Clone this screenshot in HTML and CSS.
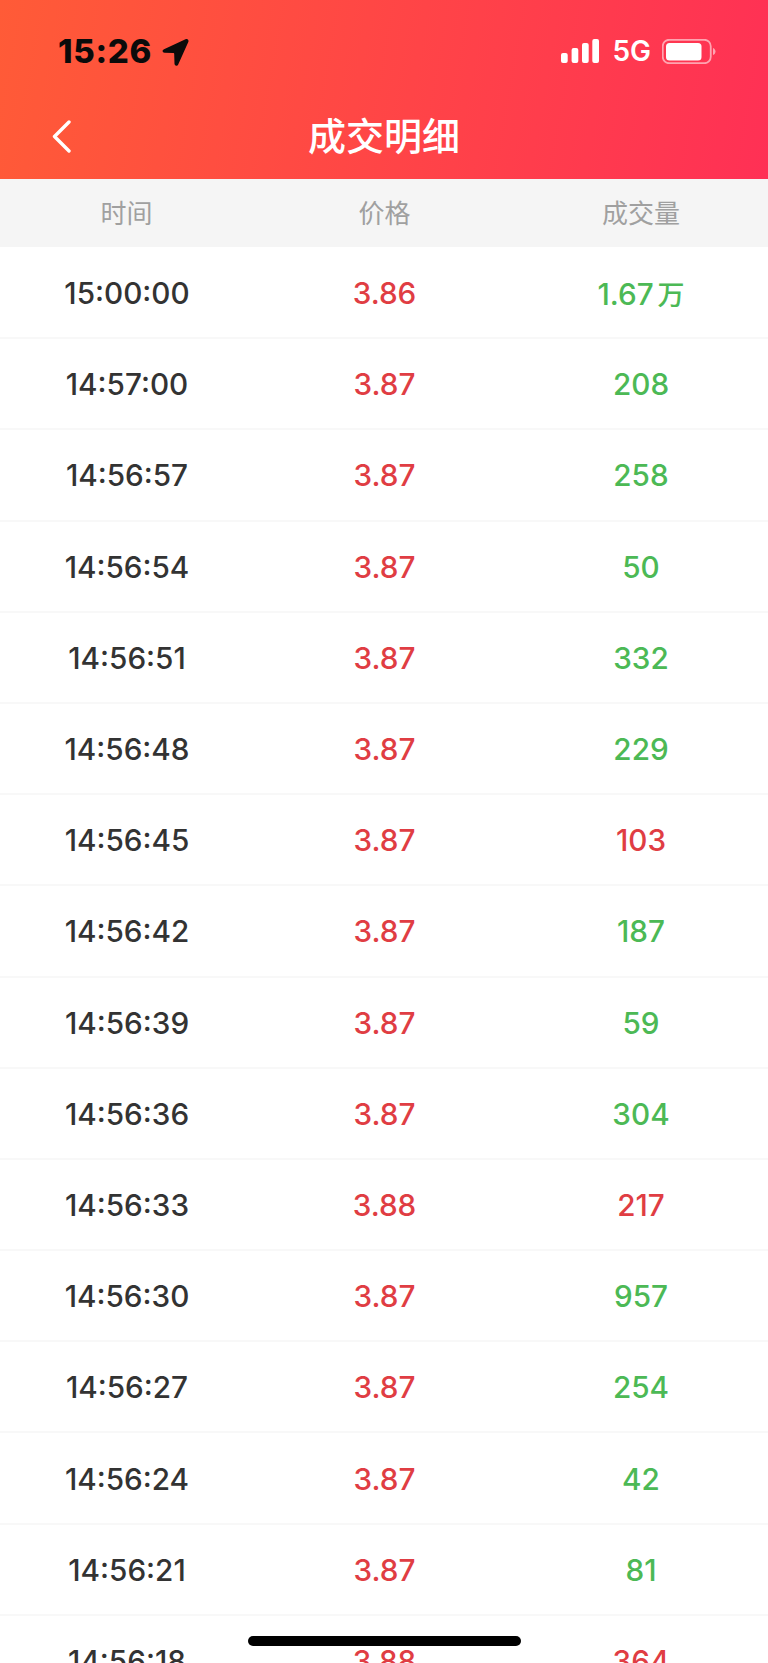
FILE: index.html
```html
<!DOCTYPE html>
<html>
<head>
    <meta charset="utf-8">
    <meta name="viewport" content="width=device-width, initial-scale=1.0">
    <title>成交明细</title>
    <link rel="stylesheet" href="styles.css">
</head>
<body>
<div class="page">
    <div class="top_bar">
        <div class="status_bar">
            <div class="status_left">
                <span class="clock">15:26</span>
                <svg class="location" width="28" height="29" viewBox="0 0 28 29"><path d="M24.5 1.2 3 11.2c-2.2 1-1.6 3.6.6 3.6l8.6.2c.6 0 1 .4 1 1l.3 9.800c.1 2.200 2.800 2.800 3.700.7L27.300 4c.8-2-.8-3.600-2.800-2.800z" fill="#0b0b0b"/></svg>
            </div>
            <div class="status_right">
                <svg class="signal" width="38" height="24" viewBox="0 0 38 24">
                    <rect x="0" y="14" width="6.700" height="10" rx="2"/>
                    <rect x="10.600" y="9" width="6.700" height="15" rx="2"/>
                    <rect x="21" y="4" width="6.700" height="20" rx="2"/>
                    <rect x="31.300" y="0" width="6.700" height="24" rx="2"/>
                </svg>
                <span class="network">5G</span>
                <svg class="battery" width="54" height="25" viewBox="0 0 54 25">
                    <rect x="0.750" y="0.750" width="48" height="23.500" rx="6.500" class="battery_frame"/>
                    <rect x="4" y="4" width="35.500" height="17.500" rx="3.500" class="battery_level"/>
                    <path d="M51 9v7c1.500-.5 2.500-2 2.500-3.500S52.500 9.500 51 9z" class="battery_tip"/>
                </svg>
            </div>
        </div>
        <div class="nav_bar">
            <a class="back_btn">
                <svg width="19" height="33" viewBox="0 0 19 33"><path d="M17 2 2.500 16.500 17 31" fill="none" stroke="#fff" stroke-width="3.400" stroke-linecap="round" stroke-linejoin="round"/></svg>
            </a>
            <div class="nav_title">成交明细</div>
        </div>
    </div>

    <div class="row head_row">
        <div>时间</div>
        <div>价格</div>
        <div>成交量</div>
    </div>

    <div class="list">
        <div class="row"><div class="time">15:00:00</div><div class="up">3.86</div><div class="down">1.67<span class="unit">万</span></div></div>
        <div class="row"><div class="time">14:57:00</div><div class="up">3.87</div><div class="down">208</div></div>
        <div class="row"><div class="time">14:56:57</div><div class="up">3.87</div><div class="down">258</div></div>
        <div class="row"><div class="time">14:56:54</div><div class="up">3.87</div><div class="down">50</div></div>
        <div class="row"><div class="time">14:56:51</div><div class="up">3.87</div><div class="down">332</div></div>
        <div class="row"><div class="time">14:56:48</div><div class="up">3.87</div><div class="down">229</div></div>
        <div class="row"><div class="time">14:56:45</div><div class="up">3.87</div><div class="up">103</div></div>
        <div class="row"><div class="time">14:56:42</div><div class="up">3.87</div><div class="down">187</div></div>
        <div class="row"><div class="time">14:56:39</div><div class="up">3.87</div><div class="down">59</div></div>
        <div class="row"><div class="time">14:56:36</div><div class="up">3.87</div><div class="down">304</div></div>
        <div class="row"><div class="time">14:56:33</div><div class="up">3.88</div><div class="up">217</div></div>
        <div class="row"><div class="time">14:56:30</div><div class="up">3.87</div><div class="down">957</div></div>
        <div class="row"><div class="time">14:56:27</div><div class="up">3.87</div><div class="down">254</div></div>
        <div class="row"><div class="time">14:56:24</div><div class="up">3.87</div><div class="down">42</div></div>
        <div class="row"><div class="time">14:56:21</div><div class="up">3.87</div><div class="down">81</div></div>
        <div class="row"><div class="time">14:56:18</div><div class="up">3.88</div><div class="up">364</div></div>
    </div>

    <div class="home_bar"></div>
</div>
</body>
</html>
```

FILE: styles.css
```css
html, body {
    margin: 0;
    padding: 0;
    background-color: #fff;
}

.page {
    position: relative;
    width: 768px;
    height: 1663px;
    overflow: hidden;
    font-family: Inter, "Noto Sans CJK SC", sans-serif;
}

.top_bar {
    height: 179px;
    background: linear-gradient(100deg, #ff5b37 0%, #ff3055 100%);
}

.status_bar {
    display: flex;
    justify-content: space-between;
    height: 92px;
    padding: 38px 52px 0 58px;
    box-sizing: border-box;
}

.status_left,
.status_right {
    display: flex;
    align-items: flex-start;
}

.clock {
    font-size: 33px;
    font-weight: 800;
    letter-spacing: 0.7px;
    line-height: 26px;
    color: #0b0b0b;
}

.location {
    margin-left: 9px;
}

.signal {
    margin-top: 1px;
    fill: #fff;
}

.network {
    margin-left: 13px;
    font-size: 28px;
    font-weight: 600;
    line-height: 26px;
    color: #fff;
}

.battery {
    margin-left: 11px;
    margin-top: 1px;
}

.battery_frame {
    fill: none;
    stroke: rgba(255, 255, 255, 0.55);
    stroke-width: 1.800;
}

.battery_level {
    fill: #fff;
}

.battery_tip {
    fill: rgba(255, 255, 255, 0.55);
}

.nav_bar {
    position: relative;
    display: flex;
    justify-content: center;
    align-items: center;
    height: 87px;
}

.back_btn {
    position: absolute;
    top: 28px;
    left: 52px;
    display: block;
    height: 33px;
}

.nav_title {
    padding-bottom: 4px;
    font-family: "Noto Sans CJK SC", sans-serif;
    font-size: 38px;
    font-weight: 500;
    line-height: 83px;
    color: #fff;
}

.list {
    padding-top: 1px;
}

.row {
    display: grid;
    grid-template-columns: 253px 263px 250px;
    align-items: center;
    height: 91.200px;
    padding-top: 1px;
    box-sizing: border-box;
    border-bottom: 2px solid #f8f8f8;
    font-size: 29.700px;
    font-weight: 500;
    text-align: center;
}

.head_row {
    height: 68px;
    padding-top: 0;
    padding-bottom: 3px;
    border-bottom: 0;
    background-color: #f5f5f5;
    font-family: "Noto Sans CJK SC", sans-serif;
    font-size: 26px;
    font-weight: 400;
    color: #a0a0a0;
}

.time {
    padding-left: 1px;
    color: #333;
}

.up {
    color: #e03d43;
}

.down {
    color: #4cb955;
}

.unit {
    margin-left: 4px;
    font-size: 27px;
}

.home_bar {
    position: absolute;
    left: 248px;
    top: 1636px;
    width: 273px;
    height: 10px;
    border-radius: 5px;
    background-color: #000;
}
```
